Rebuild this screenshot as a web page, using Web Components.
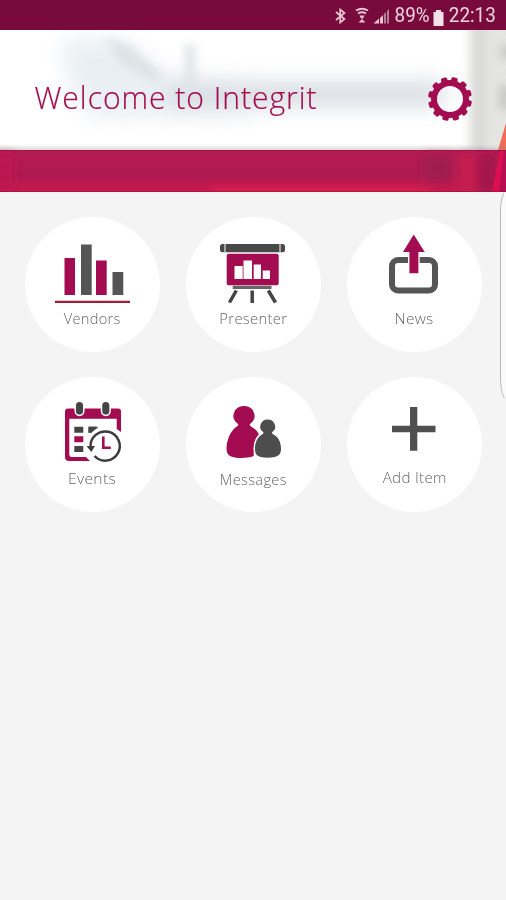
<!DOCTYPE html>
<html lang="en">
<head>
<meta charset="utf-8">
<title>Integrit</title>
<style>
html,body{margin:0;height:100%}
body{font-family:"Open Sans","Noto Sans",sans-serif;background:#f4f4f4;overflow:hidden}
</style>
</head>
<body>
<integrit-app></integrit-app>
<script>
const define=(name,html,setup)=>customElements.define(name,class extends HTMLElement{
  connectedCallback(){
    if(this.shadowRoot)return;
    this.attachShadow({mode:'open'}).innerHTML=html;
    if(setup)setup(this);
  }
});
const M='#a30c50',G='#555';

// Text stretched horizontally to the width given by its attribute
define('fit-text',`<style>
:host{display:flex;justify-content:center;white-space:nowrap;line-height:1}
span{display:block;flex:none}
</style><span><slot></slot></span>`,el=>{
  const s=el.shadowRoot.querySelector('span'),w=+el.getAttribute('width');
  el.style.width=w+'px';
  s.style.transform='scaleX('+w/s.getBoundingClientRect().width+')';
});

define('status-bar',`<style>
:host{display:flex;align-items:center;justify-content:flex-end;height:30px;box-sizing:border-box;padding:2px 10px 0 0;background:#780b3c;color:#ecd3de;font:19.500px/24px Roboto,sans-serif}
svg{display:block}
</style>
<svg width="66" height="24" viewBox="332 4 66 24" style="margin:0 -2px 0 0" fill="none" stroke="#e6c6d4">
<path d="M337 12l8.500 7-4.300 3.500V9.500l4.300 3.500-8.500 7" stroke-width="1.700"/>
<path d="M357 10.500q6-3.500 12 0M359 13.500q4-2.500 8 0" stroke-width="2"/><path d="M360.500 15.500h5l-1.500 3h-2zM359.500 22.500l3.500-3.500 3.500 3.500z" fill="#e6c6d4" stroke="none"/>
<path d="M374.500 23.500l5.500-5v5zM381 18l3-3v8.500h-3z" fill="#e6c6d4" stroke="none"/><path d="M385 14l2-2v11.500h-2zM388 11l2-2v14.500h-2z" fill="#b27f98" stroke="none"/>
</svg>
<fit-text width="35">89%</fit-text>
<svg width="11" height="24" viewBox="0 0 11 24" style="margin:0 5px 0 3px"><path d="M3 6h5v2h2.500v14H.5V8H3z" fill="#f4e1e9"/></svg>
<fit-text width="47">22:13</fit-text>`);

define('settings-gear',`<style>:host{display:block;width:46px;height:46px}svg{display:block}</style>
<svg width="46" height="46" viewBox="-23 -23 46 46"><circle r="16" fill="none" stroke="${M}" stroke-width="6"/><g fill="${M}"></g></svg>`,el=>{
  el.shadowRoot.querySelector('g').innerHTML=Array.from({length:12},(_,i)=>`<rect x="-3.200" y="-22" width="6.400" height="6.500" rx="1.800" transform="rotate(${13+i*30})"/>`).join('');
});

define('welcome-header',`<style>
:host{display:block;height:162px;position:relative;overflow:hidden;background:#fff}
.photo{position:absolute;inset:0;display:block}
.row{position:relative;display:flex;align-items:center;justify-content:space-between;height:120px;box-sizing:border-box;padding:18px 33px 0 35px}
fit-text{font-size:31.500px;font-weight:300;letter-spacing:1px;color:${M};margin-top:-4px;-webkit-text-stroke:.2px ${M}}
</style>
<svg class="photo" width="506" height="162" viewBox="0 30 506 162">
<defs><filter id="b" x="-50%" y="-50%" width="200%" height="200%"><feGaussianBlur stdDeviation="11"/></filter>
<filter id="c" x="-50%" y="-50%" width="200%" height="200%"><feGaussianBlur stdDeviation="4"/></filter>
<linearGradient id="r" x2="0" y2="1"><stop stop-color="#b51b52"/><stop offset=".6" stop-color="#ad1a50"/><stop offset="1" stop-color="#ca194d"/></linearGradient>
<linearGradient id="s" x2="0" y2="1"><stop stop-color="#888" stop-opacity="0"/><stop offset="1" stop-color="#888" stop-opacity=".3"/></linearGradient></defs>
<g filter="url(#b)"><path d="M60 40L120 38 170 76 250 82 250 116 90 118 70 85Z" fill="#e9eff3"/><path d="M165 82h280v24H165z" fill="#d6dce2"/></g>
<g filter="url(#c)"><path d="M105 38L130 45 163 76 155 82 120 63Z" fill="#d2d9de" opacity=".6"/><path d="M184 44h12v42h-12z" fill="#dce2e6" opacity=".8"/></g>
<g filter="url(#c)"><path d="M468 20h50v130h-50z" fill="#e4e5e3"/><path d="M476 25h8v130h-8z" fill="#d5d6d4"/><path d="M500 45h12v14h-12zM498 85h14v25h-14z" fill="#cbcbc9"/></g>
<path d="M506 123L498 150H506z" fill="#f26d55"/>
<path d="M0 144h506v6H0z" fill="url(#s)"/>
<path d="M0 150h506v42H0z" fill="url(#r)"/>
<g filter="url(#c)"><path d="M-10 154H15V188H-10z" fill="#bc1750"/><path d="M424 155h28v26h-28z" fill="#a01b50"/><path d="M457 155h20v40h-20z" fill="#c41d50"/><path d="M478 155h18v40h-18z" fill="#a3184c"/><path d="M210 189h220v6H210z" fill="#e4204f"/></g>
<path d="M500 151h6v41H492z" fill="#d90f52"/><path d="M504 151h2v41h-7z" fill="#b80d50"/>
<path d="M0 150.500h506M0 191.500h506" stroke="#940b40" opacity=".5"/>
</svg>
<div class="row"><fit-text width="283">Welcome to Integrit</fit-text><settings-gear></settings-gear></div>`);

const icons={
vendors:`<g fill="${M}"><path d="M39.500 41h10.500v37H39.500zM71 43.500h10.700v34.500H71z"/></g><path d="M56 27.500h10.700v50.500H56zM87.500 55h10.800v23H87.500z" fill="${G}"/><path d="M30 83.700h75v2.200H30z" fill="#a31c38"/>`,
presenter:`<rect x="34" y="27" width="65" height="8.300" rx="2.500" fill="#484848"/><path d="M39 27v8.300M94 27v8.300" stroke="#fff"/><rect x="40.700" y="36.700" width="52" height="31.500" rx="2" fill="${M}"/><path d="M48.500 49h8.200V62h-8.200zM57.500 43.500H66V62h-8.500zM67.700 47.500H75V62h-7.300zM76.700 53.500H84V62h-7.300z" fill="#fff"/><path d="M46.700 68.700h38.800v3.200H46.700z" fill="#666"/><path d="M50.300 73.500L43.500 85.500M66.200 73.500V86M82.300 73.500L89.500 85.500" stroke="#444" stroke-width="3.500" fill="none"/>`,
news:`<rect x="45" y="43" width="43" height="30.500" rx="6" fill="none" stroke="${G}" stroke-width="6"/><path d="M61 38h11.700v12H61z" fill="#fff"/><path d="M66.700 17.500L77.700 35h-6.300v21.300h-9V35H56z" fill="${M}"/>`,
events:`<path d="M43 31.500H93a3 3 0 0 1 3 3V55l-4.300-3V41.700H44.300v36q0 2.300 2.500 2.300H61l4 4H44a4 4 0 0 1-4-4V34.500a3 3 0 0 1 3-3z" fill="${M}"/><g fill="#444" stroke="#fff" stroke-width="1.500"><rect x="50.200" y="24.200" width="8.600" height="14.200" rx="4.300"/><rect x="76.500" y="24.200" width="8.600" height="14.200" rx="4.300"/></g><path d="M49.300 49.700h9v6h-9zM49.300 68.900h9v6h-9zM63.500 49.700h9v6h-9z" fill="#444"/><path d="M49.300 59.300h9v6h-9z" fill="${M}"/><circle cx="80" cy="68.700" r="19" fill="#fff"/><path d="M65.600 70A14.600 14.600 0 1 1 69.500 79" fill="none" stroke="#3c3c3c" stroke-width="2.500"/><path d="M61.500 69h8.500l-3.700 6z" fill="#3c3c3c"/><path d="M63.500 49.700h8l-5 6h-3z" fill="#444"/><path d="M78.300 59.500v11.300h7.500" fill="none" stroke="${M}" stroke-width="2.600"/>`,
messages:`<path d="M58 29a10.300 9.800 0 0 1 6.300 17.700q-1.500 1.500.7 2.700c5 2.500 8 6.500 9 11.700-4.500 5-6.500 11-6.300 18-8 3-19 2.500-24.400-.7-3-1.800-3.500-7.500-2-13.500 2-8 5.500-13 9.700-15.500q2.200-1.200.7-2.700A10.300 9.800 0 0 1 58 29z" fill="${M}"/><path d="M81.700 42.500a7.300 7 0 0 1 4.500 12.600q-1 1 .5 1.800c5.500 2.700 8.300 8 8.300 14.600 0 6-2 9.200-13.300 9.200S69 77.500 69 71.500c0-6.600 2.800-11.900 7.700-14.600q1.500-.8.500-1.800a7.300 7 0 0 1 4.500-12.600z" fill="#4d4d4d" stroke="#fff" stroke-width="3" paint-order="stroke"/>`,
add:`<path d="M63 30h7.300v18.700H88.500v6.600H70.300v18.400H63V55.300H45v-6.600h18z" fill="#505050"/>`};

define('menu-tile',`<style>
:host{display:flex;flex-direction:column;align-items:center;width:135px;height:135px;border-radius:50%;background:#fff;overflow:hidden}
svg{display:block;flex:none}
fit-text{font-size:15px;font-weight:300;letter-spacing:.3px;color:#666;line-height:20px}
</style><svg width="135" height="91" viewBox="0 0 135 91"></svg><fit-text></fit-text>`,el=>{
  const r=el.shadowRoot;
  r.querySelector('svg').innerHTML=icons[el.getAttribute('icon')];
  const f=document.createElement('fit-text');
  f.setAttribute('width',el.getAttribute('label-width'));
  f.textContent=el.getAttribute('label');
  if(el.hasAttribute('raised'))f.style.marginTop='-1px';
  if(el.hasAttribute('lowered'))f.style.marginTop='1px';
  r.querySelector('fit-text').replaceWith(f);
});

define('edge-panel',`<style>:host{display:block;position:absolute;left:500px;top:187px;width:20px;height:216px;box-sizing:border-box;border:1.500px solid #b9b9b9;border-radius:14px/34px;background:#fafafa;clip-path:inset(6px 0 5px 0)}</style>`);

define('integrit-app',`<style>
:host{display:flex;flex-direction:column;width:506px;height:900px;position:relative;overflow:hidden;background:#f4f4f4}
main{display:grid;grid-template-columns:repeat(3,135px);gap:25px 26px;padding:25px 0 0 25px}
</style>
<status-bar></status-bar><welcome-header></welcome-header>
<main>
<menu-tile icon="vendors" label="Vendors" label-width="57"></menu-tile>
<menu-tile icon="presenter" label="Presenter" label-width="68"></menu-tile>
<menu-tile icon="news" label="News" label-width="39"></menu-tile>
<menu-tile icon="events" label="Events" label-width="48"></menu-tile>
<menu-tile icon="messages" label="Messages" label-width="67" lowered></menu-tile>
<menu-tile icon="add" label="Add Item" label-width="64" raised></menu-tile>
</main>
<edge-panel></edge-panel>`);
</script>
</body>
</html>
